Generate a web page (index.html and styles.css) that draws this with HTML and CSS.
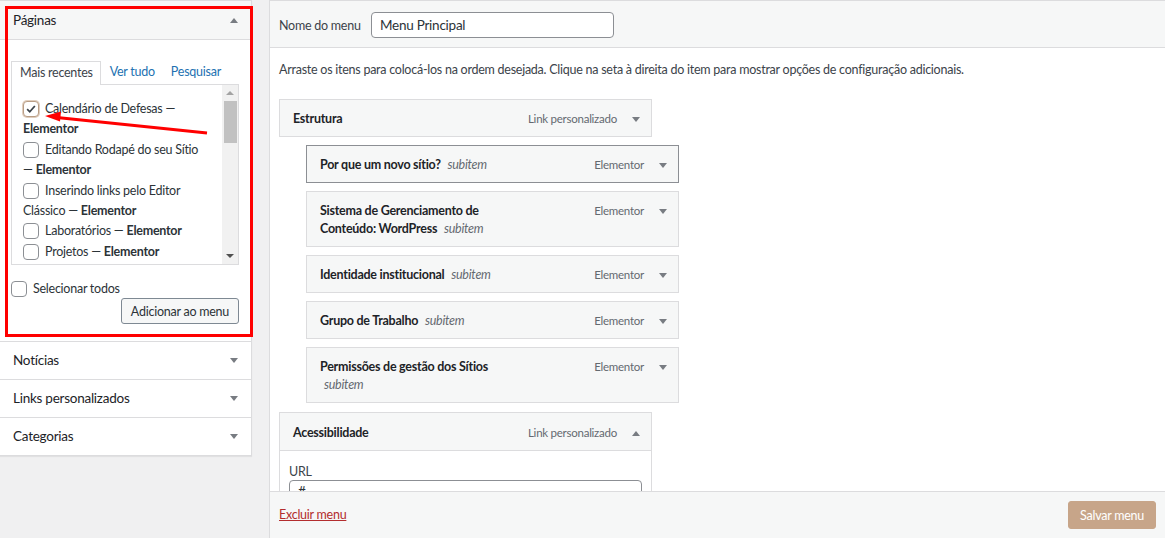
FILE: index.html
```html
<!DOCTYPE html>
<html lang="pt-BR">
<head>
<meta charset="utf-8">
<title>Menus</title>
<link rel="stylesheet" href="styles.css">
</head>
<body>
<div class="page">
  <aside class="side">
    <section class="acc open">
      <h3 class="acc-title"><span>Páginas</span><svg class="tri" viewBox="0 0 8 5"><path d="M0 5h8L4 0z"/></svg></h3>
      <div class="acc-body">
        <ul class="tabs">
          <li class="tab active">Mais recentes</li>
          <li class="tab link first"><a href="#">Ver tudo</a></li>
          <li class="tab link"><a href="#">Pesquisar</a></li>
        </ul>
        <div class="listbox">
          <ul class="checklist">
            <li><span class="cb checked"><svg viewBox="0 0 16 16"><path d="M3.6 8.2l3 3 5.8-6.6"/></svg></span>Calendário de Defesas — <b>Elementor</b></li>
            <li><span class="cb"></span>Editando Rodapé do seu Sítio — <b>Elementor</b></li>
            <li><span class="cb"></span>Inserindo links pelo Editor Clássico — <b>Elementor</b></li>
            <li><span class="cb"></span>Laboratórios — <b>Elementor</b></li>
            <li><span class="cb"></span>Projetos — <b>Elementor</b></li>
            <li><span class="cb"></span></li>
          </ul>
          <div class="scrollbar">
            <div class="sb-btn"><svg viewBox="0 0 8 4"><path class="up" d="M0 4h8L4 0z"/></svg></div>
            <div class="sb-thumb"></div>
            <div class="sb-space"></div>
            <div class="sb-btn"><svg viewBox="0 0 8 4"><path class="down" d="M0 0h8L4 4z"/></svg></div>
          </div>
        </div>
        <div class="select-all"><span class="cb"></span>Selecionar todos</div>
        <div class="actions"><button class="btn">Adicionar ao menu</button></div>
      </div>
    </section>
    <section class="acc">
      <h3 class="acc-title"><span>Notícias</span><svg class="tri" viewBox="0 0 8 5"><path d="M0 0h8L4 5z"/></svg></h3>
    </section>
    <section class="acc">
      <h3 class="acc-title"><span>Links personalizados</span><svg class="tri" viewBox="0 0 8 5"><path d="M0 0h8L4 5z"/></svg></h3>
    </section>
    <section class="acc">
      <h3 class="acc-title"><span>Categorias</span><svg class="tri" viewBox="0 0 8 5"><path d="M0 0h8L4 5z"/></svg></h3>
    </section>
  </aside>

  <main class="editor">
    <header class="editor-head">
      <label class="name-label">Nome do menu</label>
      <input class="name-input" type="text" value="Menu Principal">
    </header>
    <div class="editor-body">
      <p class="hint">Arraste os itens para colocá-los na ordem desejada. Clique na seta à direita do item para mostrar opções de configuração adicionais.</p>
      <ul class="menu">
        <li class="mi">
          <div class="handle"><span class="title">Estrutura</span><span class="controls"><span>Link personalizado</span><svg class="tri" viewBox="0 0 8 5"><path d="M0 0h8L4 5z"/></svg></span></div>
        </li>
        <li class="mi sub focus">
          <div class="handle"><span class="title">Por que um novo sítio? <span class="sub-tag">subitem</span></span><span class="controls"><span>Elementor</span><svg class="tri" viewBox="0 0 8 5"><path d="M0 0h8L4 5z"/></svg></span></div>
        </li>
        <li class="mi sub">
          <div class="handle"><span class="title">Sistema de Gerenciamento de Conteúdo: WordPress <span class="sub-tag">subitem</span></span><span class="controls"><span>Elementor</span><svg class="tri" viewBox="0 0 8 5"><path d="M0 0h8L4 5z"/></svg></span></div>
        </li>
        <li class="mi sub">
          <div class="handle"><span class="title">Identidade institucional <span class="sub-tag">subitem</span></span><span class="controls"><span>Elementor</span><svg class="tri" viewBox="0 0 8 5"><path d="M0 0h8L4 5z"/></svg></span></div>
        </li>
        <li class="mi sub">
          <div class="handle"><span class="title">Grupo de Trabalho <span class="sub-tag">subitem</span></span><span class="controls"><span>Elementor</span><svg class="tri" viewBox="0 0 8 5"><path d="M0 0h8L4 5z"/></svg></span></div>
        </li>
        <li class="mi sub">
          <div class="handle"><span class="title">Permissões de gestão dos Sítios <span class="sub-tag">subitem</span></span><span class="controls"><span>Elementor</span><svg class="tri" viewBox="0 0 8 5"><path d="M0 0h8L4 5z"/></svg></span></div>
        </li>
        <li class="mi open">
          <div class="handle"><span class="title">Acessibilidade</span><span class="controls"><span>Link personalizado</span><svg class="tri" viewBox="0 0 8 5"><path d="M0 5h8L4 0z"/></svg></span></div>
          <div class="settings">
            <label class="field-label">URL</label>
            <input class="url-input" type="text" value="#">
          </div>
        </li>
      </ul>
    </div>
    <footer class="editor-foot">
      <a class="delete" href="#">Excluir menu</a>
      <button class="save">Salvar menu</button>
    </footer>
  </main>

  <div class="annot-box"></div>
  <svg class="annot-arrow" viewBox="0 0 260 160" width="260" height="160">
    <line x1="207" y1="133" x2="57" y2="117.5"/>
    <polygon points="45,116 61,111.5 60,121.5"/>
  </svg>
</div>
</body>
</html>
```

FILE: styles.css
```css
* { box-sizing: border-box; }
html, body { margin: 0; height: 100%; }
body {
  background: #f0f0f1;
  font-family: Lato, "Liberation Sans", sans-serif;
  font-size: 12.5px;
  letter-spacing: -0.25px;
  color: #3c434a;
  overflow: hidden;
}
.page {
  position: relative;
  display: flex;
  align-items: flex-start;
  gap: 17px;
  height: 538px;
}

/* ---------- left column ---------- */
.side {
  width: 252px;
  flex: none;
  background: #fff;
  border-top: 1px solid #dcdcde;
  border-right: 1px solid #dcdcde;
  box-shadow: 0 1px 1px rgba(0, 0, 0, 0.06);
}
.acc { border-bottom: 1px solid #dcdcde; }
.acc-title {
  margin: 0;
  display: flex;
  justify-content: space-between;
  align-items: center;
  padding: 8px 13px 9px 13px;
  font-size: 13.5px;
  font-weight: 400;
  line-height: 20px;
  color: #1d2327;
}
.acc.open .acc-title {
  padding: 9px 13px 9px 13px;
  background: #f6f7f7;
  border-bottom: 1px solid #dcdcde;
}
.tri { width: 8px; height: 5px; fill: #787c82; flex: none; }

.acc-body { padding: 21px 12px 17px 11px; }
.tabs {
  list-style: none;
  margin: 0;
  padding: 0;
  display: flex;
  height: 23px;
  position: relative;
  z-index: 1;
  white-space: nowrap;
}
.tab { padding: 0 8px; line-height: 22px; color: #3c434a; }
.tab.active {
  padding: 0 7px 0 8px;
  border: 1px solid #dcdcde;
  border-bottom: none;
  background: #fff;
  height: 24px;
}
.tab.first { margin-left: 1px; }
.tab a { color: #2271b1; text-decoration: none; }

.listbox {
  display: flex;
  width: 228px;
  height: 181px;
  border: 1px solid #dcdcde;
  background: #fff;
  overflow: hidden;
}
.checklist {
  flex: 1;
  margin: 0;
  padding: 14px 12px 0 11px;
  list-style: none;
  line-height: 20.4px;
  color: #2c3338;
}
.checklist b { font-weight: 700; }
.cb {
  display: inline-block;
  width: 16px;
  height: 16px;
  border: 1px solid #8c8f94;
  border-radius: 4px;
  background: #fff;
  vertical-align: -4px;
  margin-right: 6px;
}
.cb.checked {
  border-color: #b99d85;
  box-shadow: 0 0 0 1px rgba(199, 165, 137, 0.55);
}
.cb svg { display: block; width: 14px; height: 14px; fill: none; stroke: #3c434a; stroke-width: 2; }

.scrollbar {
  width: 16px;
  flex: none;
  background: #f1f1f1;
  display: flex;
  flex-direction: column;
  align-items: center;
}
.sb-btn { height: 16px; width: 16px; display: flex; align-items: center; justify-content: center; }
.sb-btn svg { width: 8px; height: 4px; }
.sb-btn .up { fill: #a3a3a3; }
.sb-btn .down { fill: #505050; }
.sb-thumb { width: 13px; height: 42px; background: #c1c1c1; }
.sb-space { flex: 1; }

.select-all {
  display: flex;
  align-items: center;
  margin-top: 15px;
  line-height: 18px;
  color: #2c3338;
}
.select-all .cb { margin-right: 6px; vertical-align: 0; }
.actions { display: flex; justify-content: flex-end; }
.btn {
  height: 26px;
  padding: 0 9px;
  font: inherit;
  letter-spacing: inherit;
  color: #2c3338;
  background: #f6f7f7;
  border: 1px solid #7e8993;
  border-radius: 3px;
}

/* ---------- right editor ---------- */
.editor {
  flex: 1;
  min-width: 0;
  height: 538px;
  display: flex;
  flex-direction: column;
  background: #fff;
  border-top: 1px solid #dcdcde;
  border-left: 1px solid #dcdcde;
}
.editor-head {
  display: flex;
  align-items: center;
  padding: 11px 9px 9px;
  background: #f6f7f7;
  border-bottom: 1px solid #dcdcde;
}
.name-label { width: 92px; flex: none; color: #3c434a; }
.name-input {
  width: 243px;
  height: 26px;
  padding: 0 8px;
  font: inherit;
  font-size: 13.5px;
  letter-spacing: inherit;
  color: #2c3338;
  background: #fff;
  border: 1px solid #8c8f94;
  border-radius: 4px;
}
.editor-body {
  flex: 1;
  min-height: 0;
  overflow: hidden;
  padding: 0 9px;
}
.hint { margin: 12px 0 19px; line-height: 20px; color: #3c434a; }
.menu {
  list-style: none;
  margin: 0;
  padding: 0;
  display: flex;
  flex-direction: column;
  gap: 8px;
}
.mi { width: 373px; }
.mi.sub { margin-left: 27px; }
.mi.open { margin-top: 1px; }
.handle {
  display: flex;
  justify-content: space-between;
  align-items: flex-start;
  padding: 10px 11px 8px 13px;
  background: #f6f7f7;
  border: 1px solid #dcdcde;
  line-height: 18px;
}
.mi.open .handle { padding: 11px 11px 8px 13px; }
.mi.focus .handle { border-color: #8c8f94; }
.title { width: 177px; flex: none; font-weight: 700; color: #1d2327; }
.sub-tag { margin-left: 4px; font-style: italic; font-weight: 400; color: #646970; }
.controls {
  display: flex;
  align-items: center;
  gap: 15px;
  height: 18px;
  font-size: 11.5px;
  white-space: nowrap;
  color: #646970;
}
.settings {
  padding: 12px 9px 10px;
  background: #fff;
  border: 1px solid #dcdcde;
  border-top: none;
}
.field-label { display: block; line-height: 17px; color: #3c434a; }
.url-input {
  display: block;
  width: 100%;
  height: 30px;
  padding: 0 8px 8px;
  font: inherit;
  font-size: 13.5px;
  color: #2c3338;
  border: 1px solid #8c8f94;
  border-radius: 4px;
}
.editor-foot {
  display: flex;
  justify-content: space-between;
  align-items: center;
  padding: 9px;
  background: #f6f7f7;
  border-top: 1px solid #dcdcde;
}
.delete { color: #b32d2e; text-decoration: underline; line-height: 20px; }
.save {
  height: 28px;
  padding: 0 11px;
  font: inherit;
  letter-spacing: inherit;
  color: #fff;
  background: #c7a589;
  border: 1px solid #c7a589;
  border-radius: 3px;
}

/* ---------- annotation overlay ---------- */
.annot-box {
  position: absolute;
  left: 5px;
  top: 6px;
  width: 248px;
  height: 331px;
  border: 3px solid #f00;
  pointer-events: none;
}
.annot-arrow {
  position: absolute;
  left: 0;
  top: 0;
  pointer-events: none;
}
.annot-arrow line { stroke: #f00; stroke-width: 3; }
.annot-arrow polygon { fill: #f00; }
```
